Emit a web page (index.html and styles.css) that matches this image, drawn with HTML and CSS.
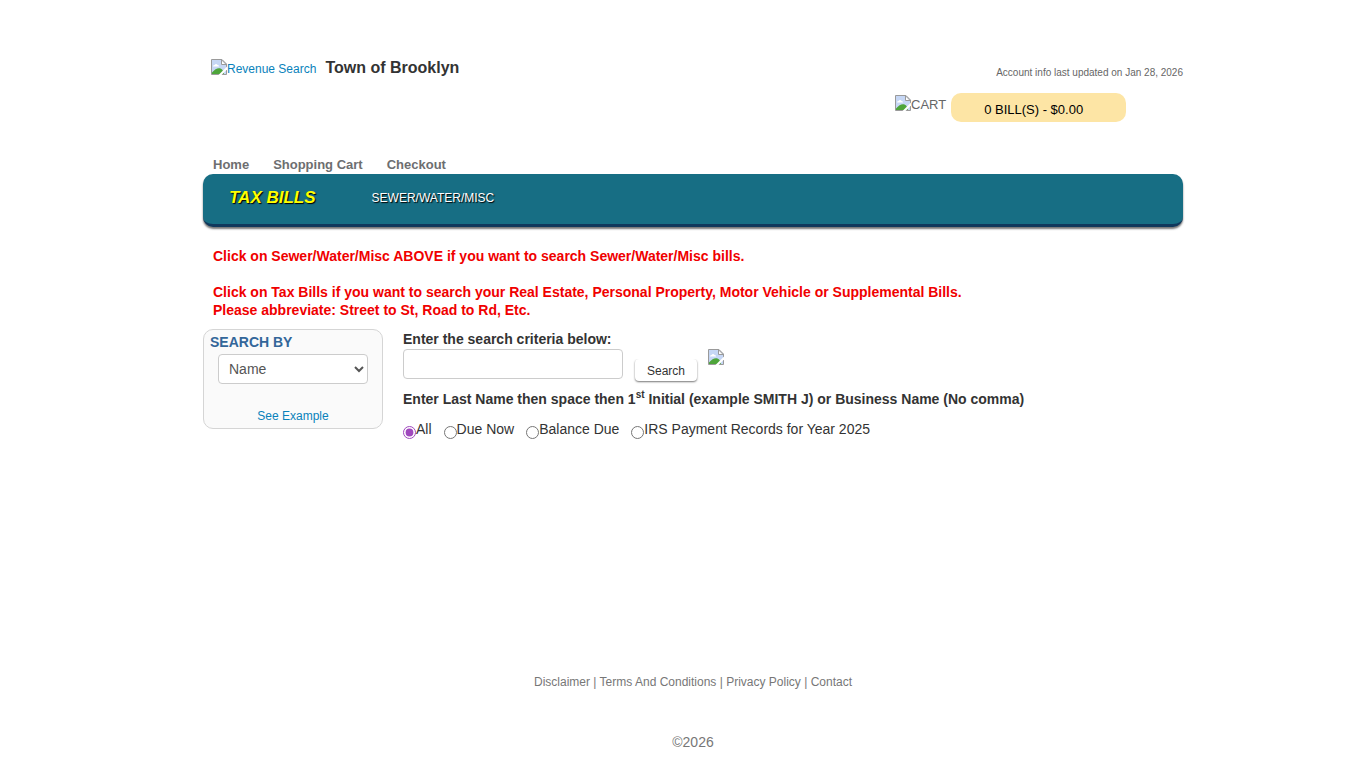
FILE: index.html
```html
<!DOCTYPE html>
<html lang="en">
<head>
<meta charset="utf-8">
<title>Town of Brooklyn - Revenue Search</title>
<meta name="viewport" content="width=device-width, initial-scale=1">
<link rel="stylesheet" href="styles.css">
</head>
<body>
<svg class="defs" width="0" height="0" aria-hidden="true">
  <symbol id="picture" viewBox="0 0 16 16">
    <path d="M.5.5h10.500l4.500 4.500v10.500H.5z" fill="#c6d7f5" stroke="#9a9a9a"/>
    <path d="M2 7.500c0-1 .8-1.500 1.600-1.500.4-1.200 2.500-1.200 2.900 0 1 0 1.500.7 1.500 1.500z" fill="#fff"/>
    <path d="M1 15v-1.500C4 10 7 8.500 9.500 9.500c2 .8 3 2.500 3.500 5.500z" fill="#4ea53a"/>
    <path d="M16 7.500v3L10.500 16H7.500z" fill="#fff"/>
    <path d="M10.500.8v4.700h4.700z" fill="#fff" stroke="#9a9a9a"/>
  </symbol>
</svg>
<div class="page">
  <header class="header">
    <div class="brand">
      <a class="logo" href="#"><svg class="picture"><use href="#picture"/></svg><span>Revenue Search</span></a>
      <h1 class="town">Town of Brooklyn</h1>
    </div>
    <div class="account">
      <p class="updated">Account info last updated on Jan 28, 2026</p>
      <div class="cart">
        <span class="cart-label"><svg class="picture"><use href="#picture"/></svg>CART</span>
        <a class="cart-total" href="#">0 BILL(S) - $0.00</a>
      </div>
    </div>
  </header>
  <nav class="links">
    <a href="#">Home</a>
    <a href="#">Shopping Cart</a>
    <a href="#">Checkout</a>
  </nav>
  <nav class="tabs">
    <a class="tab active" href="#">TAX BILLS</a>
    <a class="tab" href="#">SEWER/WATER/MISC</a>
  </nav>
  <main>
    <div class="notice">
      <p>Click on Sewer/Water/Misc ABOVE if you want to search Sewer/Water/Misc bills.</p>
      <p>Click on Tax Bills if you want to search your Real Estate, Personal Property, Motor Vehicle or Supplemental Bills.<br>Please abbreviate: Street to St, Road to Rd, Etc.</p>
    </div>
    <form class="search">
      <div class="search-by">
        <label class="search-by-title" for="by">SEARCH BY</label>
        <select class="field" id="by"><option>Name</option></select>
        <a class="example" href="#">See Example</a>
      </div>
      <div class="criteria">
        <label class="criteria-title" for="criteria">Enter the search criteria below:</label>
        <div class="entry">
          <input class="field text" id="criteria" type="text">
          <button class="submit" type="button">Search</button>
          <svg class="picture"><use href="#picture"/></svg>
        </div>
        <p class="hint">Enter Last Name then space then 1<sup>st</sup> Initial (example SMITH J) or Business Name (No comma)</p>
        <div class="options">
          <label><input type="radio" name="status" checked>All</label>
          <label><input type="radio" name="status">Due Now</label>
          <label><input type="radio" name="status">Balance Due</label>
          <label><input type="radio" name="status">IRS Payment Records for Year 2025</label>
        </div>
      </div>
    </form>
  </main>
  <footer class="footer">
    <p class="legal"><a href="#">Disclaimer</a> | <a href="#">Terms And Conditions</a> | <a href="#">Privacy Policy</a> | <a href="#">Contact</a></p>
    <p class="copyright">©2026</p>
  </footer>
</div>
</body>
</html>
```
FILE: styles.css
```css
* { box-sizing: border-box; }
body {
  margin: 0;
  padding-left: 20px;
  background: #fff;
  color: #333;
  font: 14px/18px "Liberation Sans", Arial, sans-serif;
}
p, h1 { margin: 0; }
a { color: #08c; text-decoration: none; }
.defs { position: absolute; }
.page {
  display: flex;
  flex-direction: column;
  max-width: 980px;
  min-height: 100vh;
  margin: 0 auto;
  padding-top: 58px;
}
.picture { flex: none; width: 16px; height: 16px; }
.header {
  display: flex;
  justify-content: space-between;
  min-height: 98px;
}
.brand {
  display: flex;
  align-items: flex-start;
  gap: 9px;
  padding-left: 8px;
}
.logo { display: flex; padding-top: 1px; font-size: 12px; line-height: 20px; color: #0a82bb; }
.town { font-size: 16px; line-height: 20px; }
.account { color: #666; }
.updated { padding-top: 6px; font-size: 10px; text-align: right; }
.cart { display: flex; gap: 5px; padding-top: 11px; width: 288px; font-size: 13px; }
.cart-label { display: flex; padding-top: 2px; line-height: 20px; }
.cart-total {
  width: 175px;
  height: 29px;
  padding: 8px 0 0 33px;
  border-radius: 10px;
  background: #fde5a5;
  color: #000;
}
.links {
  display: flex;
  gap: 24px;
  padding-left: 10px;
  font-size: 13px;
  font-weight: bold;
}
.links a { color: #6d6e70; }
.tabs {
  display: flex;
  gap: 56px;
  height: 53px;
  padding: 14px 26px 0;
  border-bottom: 3px solid #10385c;
  border-radius: 10px;
  background: #176e84;
  box-shadow: 0 2px 2px #777;
}
.tab { color: #fff; font-size: 12px; line-height: 20px; text-shadow: 1px 1px 1px #000; }
.tab.active { color: #ff0; font-size: 17px; line-height: 19px; font-weight: bold; font-style: italic; }
.notice {
  display: grid;
  gap: 18px;
  padding: 20px 10px 10px;
  color: #f00000;
  font-weight: bold;
}
.search { display: flex; align-items: flex-start; gap: 20px; }
.search-by {
  display: flex;
  flex-direction: column;
  flex: 0 0 180px;
  height: 100px;
  padding: 3px 6px;
  border: 1px solid #d5d5d5;
  border-radius: 10px;
  background: #fafafa;
}
.search-by-title { color: #336699; font-weight: bold; }
.field {
  height: 30px;
  border: 1px solid #ccc;
  border-radius: 4px;
  background: #fff;
  color: #555;
  font: inherit;
}
.search-by .field { width: 150px; margin: 3px 0 0 8px; padding: 4px 6px; }
.example { margin-top: 23px; font-size: 12px; text-align: center; color: #0a82bb; }
.criteria { flex: 1; min-width: 0; }
.criteria-title { display: block; padding-top: 1px; font-weight: bold; }
.entry { display: flex; align-items: flex-start; gap: 11px; padding-top: 1px; }
.field.text { width: 220px; padding: 4px 6px; }
.submit {
  height: 22px;
  margin: 10px 0 0 1px;
  padding: 2px 12px 0;
  border: 0;
  border-radius: 4px;
  background: #fff;
  box-shadow: 0 1px 2px #777;
  clip-path: inset(0 -3px -4px);
  color: #333;
  font: inherit;
  font-size: 12px;
}
.hint { padding-top: 9px; font-weight: bold; }
.hint sup { font-size: 10px; line-height: 0; }
.options { display: flex; gap: 12px; padding-top: 12px; }
.options label { display: flex; }
.options input { width: 13px; height: 13px; margin: 6px 0 0; accent-color: #9f48bd; }
.footer { margin-top: auto; padding-bottom: 17px; color: #777; text-align: center; }
.footer a { color: inherit; }
.legal { font-size: 12px; }
.copyright { padding-top: 42px; }
```
